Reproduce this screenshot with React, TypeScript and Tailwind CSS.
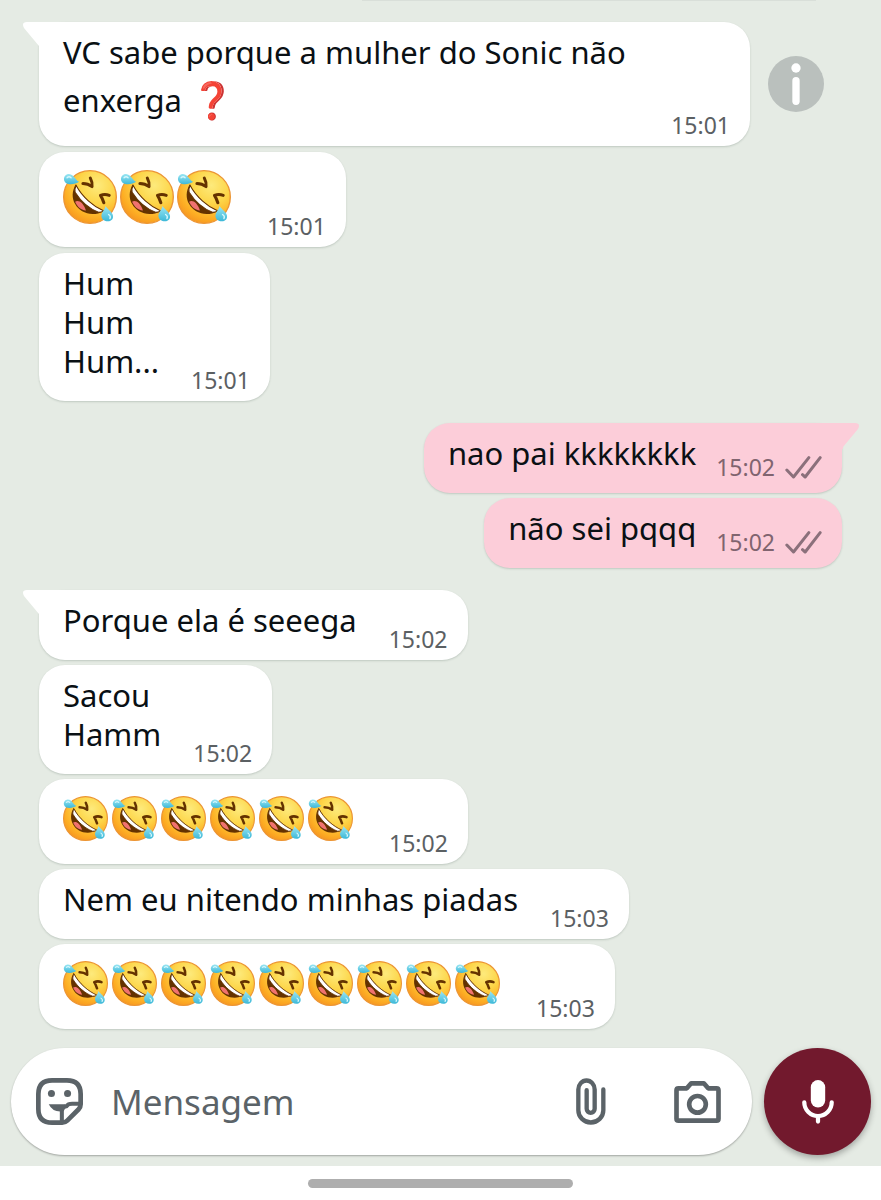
import type { ReactNode } from "react"

type Message = {
    id: number
    text?: ReactNode
    emojis?: number
    time: string
    info?: boolean
}

type Group = {
    id: string
    mine?: boolean
    gap: string
    messages: Message[]
}

const groups: Group[] = [
    {
        id: "intro",
        gap: "gap-1.5",
        messages: [
            {
                id: 1,
                text: (
                    <>
                        VC sabe porque a mulher do Sonic não enxerga <QuestionMark />
                    </>
                ),
                time: "15:01",
                info: true,
            },
            { id: 2, emojis: 3, time: "15:01" },
            { id: 3, text: "Hum\nHum\nHum...", time: "15:01" },
        ],
    },
    {
        id: "reply",
        mine: true,
        gap: "gap-[5px]",
        messages: [
            { id: 4, text: "nao pai kkkkkkkk", time: "15:02" },
            { id: 5, text: "não sei pqqq", time: "15:02" },
        ],
    },
    {
        id: "punchline",
        gap: "gap-[5px]",
        messages: [
            { id: 6, text: "Porque ela é seeega", time: "15:02" },
            { id: 7, text: "Sacou\nHamm", time: "15:02" },
            { id: 8, emojis: 6, time: "15:02" },
            { id: 9, text: "Nem eu nitendo minhas piadas", time: "15:03" },
            { id: 10, emojis: 9, time: "15:03" },
        ],
    },
]

function QuestionMark() {
    return (
        <span className="inline-block h-[54px] overflow-hidden align-[-14px] font-['DejaVu_Sans',sans-serif] text-[36px] leading-[58px] text-[#ea1c0d]">
            ❓
        </span>
    )
}

function Rofl({ className }: { className: string }) {
    return (
        <svg viewBox="0 0 160 160" className={className} role="img" aria-label="🤣">
            <defs>
                <radialGradient id="face" cx="0.64" cy="0.28" r="0.78">
                    <stop offset="0" stopColor="#fdea7c" />
                    <stop offset="0.45" stopColor="#fdd548" />
                    <stop offset="0.8" stopColor="#fdae24" />
                    <stop offset="1" stopColor="#f69420" />
                </radialGradient>
                <linearGradient id="tear" x1="0" y1="0" x2="0" y2="1">
                    <stop offset="0" stopColor="#9be6f3" />
                    <stop offset="1" stopColor="#3cb8d8" />
                </linearGradient>
            </defs>
            <circle cx="80" cy="80" r="78" fill="url(#face)" stroke="#ec9534" strokeWidth="4" />
            <path d="M38 42C26 62 26 84 36 101C50 127 86 140 121 122C100 114 56 82 38 42Z" fill="#643200" />
            <path d="M36 94C46 88 60 96 68 120C52 118 42 108 36 94Z" fill="#f0726f" />
            <path d="M39 46C35 54 34 61 36 66C53 93 78 115 105 125C112 125 117 124 120 121C90 108 57 80 39 46Z" fill="#fff" stroke="#643200" strokeWidth="3" />
            <path d="M59 40Q74 40 86 49Q88 37 81 24" fill="none" stroke="#643200" strokeWidth="9" strokeLinejoin="round" strokeLinecap="round" />
            <path d="M137 75Q124 70 111 75Q117 84 121 97" fill="none" stroke="#643200" strokeWidth="9" strokeLinejoin="round" strokeLinecap="round" />
            <path d="M48 35C38 33 33 13 18 12C8 12 2 20 3 29C6 47 34 45 48 35Z" fill="url(#tear)" />
            <path d="M126 107C125 118 113 125 114 138C116 155 143 157 148 142C152 127 133 119 126 107Z" fill="url(#tear)" />
            <path d="M12 23Q18 17 24 23M135 132Q143 137 139 144" fill="none" stroke="#d5f7fc" strokeWidth="4" strokeLinecap="round" />
        </svg>
    )
}

function Ticks() {
    return (
        <svg viewBox="0 0 110 69" className="h-[23px] w-[37px] text-[#8b707b]" fill="none" stroke="currentColor" strokeWidth="9" strokeLinecap="round" strokeLinejoin="round" role="img" aria-label="Entregue">
            <path d="M5 42L25 63L71 5M52 56L60 63L105 5" />
        </svg>
    )
}

function Tail({ mine }: { mine?: boolean }) {
    return (
        <svg
            viewBox="0 0 44 26"
            className={mine ? "absolute top-0 -right-[17px] h-[26px] w-11 -scale-x-100 text-[#fccdd9]" : "absolute top-0 -left-4 h-[26px] w-11 text-white"}
            aria-hidden="true"
        >
            <path d="M4 0H44V26H16V24L1 6Q-2 0 4 0Z" fill="currentColor" />
        </svg>
    )
}

function Bubble({ message, mine, first }: { message: Message; mine?: boolean; first: boolean }) {
    const { text, emojis, time } = message
    const big = emojis === 3
    const gap = mine ? "gap-5" : emojis ? "gap-9" : "gap-8"

    return (
        <div
            className={`relative flex max-w-[711px] items-end rounded-[26px] pr-5 pb-[9px] pl-6 shadow-[0_1px_2px_rgba(60,80,70,0.22)] ${gap} ${
                mine ? "bg-[#fccdd9]" : "bg-white"
            }`}
        >
            {first && <Tail mine={mine} />}
            {emojis ? (
                <div className={`relative flex pb-3.5 ${big ? "gap-[3px] pt-[18px]" : "gap-1 pt-[17px]"}`}>
                    {Array.from({ length: emojis }, (_, i) => (
                        <Rofl key={i} className={big ? "size-[54px]" : "size-[45px]"} />
                    ))}
                </div>
            ) : (
                <p className="relative pt-[11px] pb-[11px] text-[31px] leading-[39px] whitespace-pre-line text-[#0a1014]">{text}</p>
            )}
            <div className={`relative flex items-end gap-2.5 text-[23px] leading-6 ${mine ? "pb-[5px] text-[#80646f]" : "text-[#5b6063]"}`}>
                <time>{time}</time>
                {mine && <Ticks />}
            </div>
        </div>
    )
}

function InfoButton() {
    return (
        <button type="button" aria-label="Informações" className="shrink-0">
            <svg viewBox="0 0 168 168" className="size-14">
                <circle cx="84" cy="84" r="84" fill="#bac0bd" />
                <circle cx="84" cy="36" r="14" fill="#fff" />
                <rect x="73" y="63" width="22" height="84" rx="11" fill="#fff" />
            </svg>
        </button>
    )
}

function Composer() {
    return (
        <form className="flex items-center gap-3 pr-2.5 pb-[11px] pl-[11px]" onSubmit={(e) => e.preventDefault()}>
            <div className="flex h-[107px] min-w-0 flex-1 items-center rounded-full bg-white pr-[31px] pl-[25px] text-[#5b6368] shadow-[0_1px_2px_rgba(0,0,0,0.3)]">
                <button type="button" aria-label="Figurinhas" className="shrink-0">
                    <svg viewBox="0 0 140 140" className="size-[47px]" fill="none" stroke="currentColor" strokeWidth="14" strokeLinejoin="round">
                        <path d="M48 7H92Q133 7 133 48V78Q133 87 127 93L93 127Q87 133 78 133H48Q7 133 7 92V48Q7 7 48 7Z" />
                        <path d="M131 77H108Q95 77 91 84Q78 86 77 99V131" strokeWidth="12" />
                        <path d="M38 78H88Q86 92 80 99Q50 103 38 78Z" fill="currentColor" stroke="none" />
                        <circle cx="46" cy="46" r="10.500" fill="currentColor" stroke="none" />
                        <circle cx="94" cy="46" r="10.500" fill="currentColor" stroke="none" />
                    </svg>
                </button>
                <input
                    type="text"
                    aria-label="Mensagem"
                    placeholder="Mensagem"
                    className="ml-7 min-w-0 flex-1 bg-transparent text-[35px] leading-[48px] outline-none placeholder:text-[#5b6368]"
                />
                <button type="button" aria-label="Anexar" className="shrink-0">
                    <svg viewBox="0 0 90 140" className="h-[47px] w-[30px]" fill="none" stroke="currentColor" strokeWidth="13" strokeLinecap="round">
                        <path d="M82 34V96A37.500 37 0 0 1 7 96V34A24.500 27 0 0 1 56 34V92A12 12 0 0 1 32 92V36" />
                    </svg>
                </button>
                <button type="button" aria-label="Câmera" className="ml-[68px] shrink-0">
                    <svg viewBox="0 0 140 126" className="h-[42px] w-[47px]" fill="none" stroke="currentColor" strokeWidth="14" strokeLinejoin="round">
                        <path d="M13 22H38L51 7H89L102 22H127Q133 22 133 28V113Q133 119 127 119H13Q7 119 7 113V28Q7 22 13 22Z" />
                        <circle cx="70" cy="70" r="25" />
                    </svg>
                </button>
            </div>
            <button
                type="button"
                aria-label="Gravar áudio"
                className="flex size-[107px] shrink-0 items-center justify-center rounded-full bg-[#72192d] text-white shadow-[0_3px_6px_rgba(0,0,0,0.3)]"
            >
                <svg viewBox="0 0 98 134" className="h-11 w-8" fill="none" stroke="currentColor" strokeWidth="13" strokeLinecap="round">
                    <rect x="27" y="0" width="44" height="84" rx="22" fill="currentColor" stroke="none" />
                    <path d="M7 68A42 42 0 0 0 91 68M49 110V127" />
                </svg>
            </button>
        </form>
    )
}

export default function App() {
    return (
        <div className="flex min-h-screen flex-col bg-[#e5ebe4] font-['Noto_Sans',sans-serif]">
            <main className="flex-1 px-[39px] pb-[19px]">
                {/* bottom edge of the message scrolled out above */}
                <div className="mr-[26px] ml-auto h-px w-[454px] max-w-full bg-[#d9dfd9]" />
                <div className="flex flex-col gap-[22px] pt-[21px]">
                    {groups.map((g) => (
                        <section key={g.id} className={`flex flex-col ${g.gap} ${g.mine ? "items-end" : "items-start"}`}>
                            {g.messages.map((m, i) => (
                                <div key={m.id} className="flex max-w-full items-center gap-[18px]">
                                    <Bubble message={m} mine={g.mine} first={i === 0} />
                                    {m.info && <InfoButton />}
                                </div>
                            ))}
                        </section>
                    ))}
                </div>
            </main>
            <Composer />
            <footer className="flex h-[34px] items-center justify-center bg-white">
                <div className="h-[9px] w-[265px] rounded-full bg-[#aeaeae]" />
            </footer>
        </div>
    )
}
